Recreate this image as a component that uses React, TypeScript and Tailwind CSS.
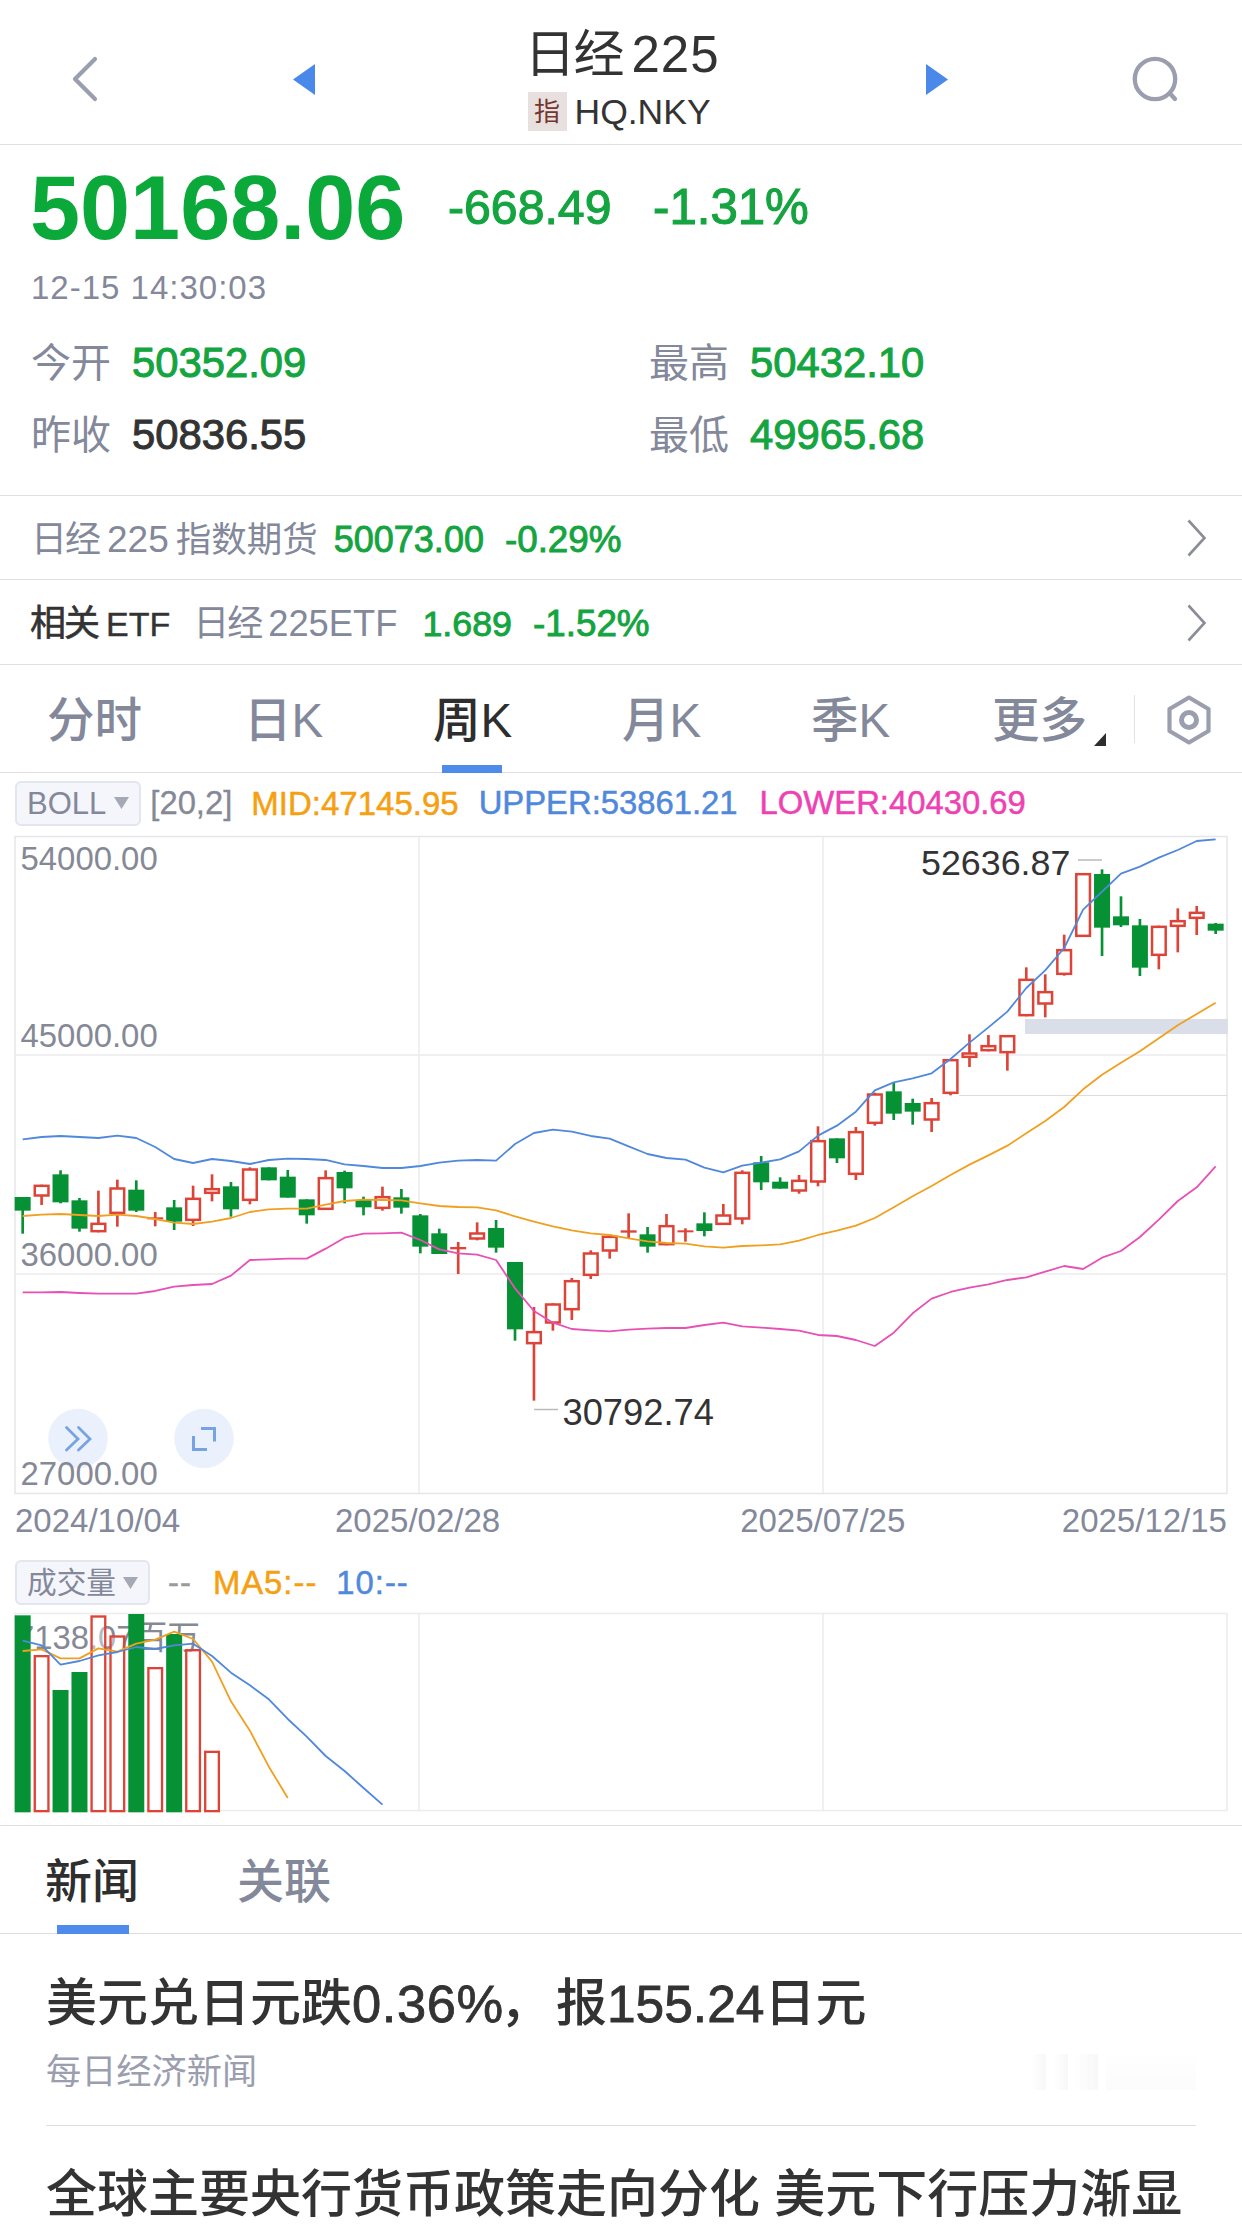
import React, { useState } from 'react';

type Candle = [string, number, number, number, number];

// direction, high, body top, body bottom, low
const candles: Candle[] = [
  ['G', 1083, 1083, 1124, 1193], ['R', 1046, 1046, 1082, 1107], ['G', 1003, 1015, 1099, 1102], ['G', 1086, 1093, 1178, 1187],
  ['R', 1064, 1160, 1189, 1189], ['R', 1031, 1054, 1134, 1172], ['G', 1033, 1061, 1124, 1128], ['R', 1128, 1144, 1150, 1171],
  ['G', 1092, 1114, 1157, 1182], ['R', 1049, 1085, 1155, 1170], ['R', 1015, 1056, 1074, 1096], ['G', 1038, 1051, 1120, 1142],
  ['R', 994, 997, 1095, 1105], ['G', 994, 994, 1033, 1033], ['G', 1002, 1022, 1085, 1085], ['G', 1090, 1090, 1138, 1163],
  ['R', 1003, 1023, 1122, 1122], ['G', 1004, 1008, 1057, 1102], ['G', 1082, 1092, 1114, 1138], ['R', 1052, 1080, 1119, 1124],
  ['G', 1059, 1084, 1115, 1133], ['G', 1134, 1138, 1232, 1252], ['G', 1178, 1192, 1254, 1254], ['R', 1218, 1233, 1240, 1314],
  ['R', 1159, 1189, 1211, 1213], ['G', 1152, 1176, 1235, 1250], ['G', 1278, 1278, 1480, 1514], ['R', 1413, 1485, 1525, 1694],
  ['R', 1402, 1402, 1463, 1484], ['R', 1326, 1332, 1423, 1452], ['R', 1243, 1249, 1320, 1329], ['R', 1199, 1199, 1247, 1268],
  ['R', 1132, 1183, 1190, 1207], ['G', 1173, 1195, 1232, 1250], ['R', 1134, 1167, 1228, 1228], ['R', 1177, 1183, 1189, 1217],
  ['G', 1129, 1162, 1185, 1201], ['R', 1104, 1135, 1167, 1167], ['R', 1003, 1007, 1151, 1165], ['G', 960, 979, 1039, 1062],
  ['G', 1024, 1037, 1058, 1058], ['R', 1017, 1031, 1067, 1073], ['R', 871, 912, 1040, 1051], ['G', 907, 907, 967, 981],
  ['R', 873, 885, 1017, 1032], ['R', 770, 772, 864, 869], ['G', 739, 766, 833, 852], ['G', 788, 801, 827, 866],
  ['R', 786, 798, 854, 888], ['R', 669, 669, 774, 778], ['R', 595, 649, 666, 693], ['R', 597, 627, 646, 646],
  ['R', 597, 597, 652, 704], ['R', 394, 428, 541, 541], ['R', 415, 465, 506, 544], ['R', 296, 339, 417, 419],
  ['R', 111, 111, 303, 303], ['G', 100, 114, 275, 360], ['G', 181, 241, 268, 273], ['G', 249, 268, 395, 420],
  ['R', 269, 269, 360, 400], ['R', 217, 252, 273, 349], ['R', 210, 227, 249, 297], ['G', 261, 263, 284, 294],
];

const upper = [
  910, 903, 900, 903, 906, 899, 906, 933, 969, 981, 969, 975, 984, 972, 968, 969, 972, 985, 990, 996, 996, 990, 980, 974, 972, 974, 924, 891, 881, 887, 900, 908,
  931, 954, 966, 971, 995, 1009, 989, 980, 970, 946, 899, 869, 827, 763, 739, 727, 712, 669, 620, 574, 527, 456, 403, 336, 221, 167, 113, 92, 65, 42, 15, 10,
];
const mid = [
  1140, 1136, 1134, 1137, 1140, 1136, 1140, 1149, 1160, 1164, 1157, 1146, 1128, 1120, 1118, 1118, 1106, 1095, 1091, 1092, 1093, 1102, 1110, 1113, 1114, 1123, 1141, 1157, 1171, 1183, 1192, 1197,
  1207, 1216, 1221, 1223, 1231, 1235, 1230, 1228, 1225, 1214, 1197, 1184, 1169, 1146, 1114, 1081, 1050, 1017, 986, 958, 929, 892, 855, 813, 760, 716, 680, 646, 607, 568, 534, 500,
];
const lower = [
  1369, 1369, 1368, 1371, 1373, 1373, 1373, 1365, 1352, 1347, 1344, 1319, 1272, 1270, 1268, 1268, 1238, 1205, 1193, 1192, 1190, 1212, 1240, 1252, 1256, 1272, 1357, 1425, 1460, 1479, 1483, 1486,
  1481, 1478, 1476, 1476, 1467, 1460, 1471, 1475, 1479, 1484, 1497, 1500, 1512, 1530, 1490, 1432, 1388, 1368, 1355, 1345, 1332, 1324, 1307, 1290, 1299, 1265, 1245, 1203, 1151, 1095, 1054, 991,
];

const volumes: [string, number][] = [
  ['G', 4], ['R', 123], ['G', 228], ['G', 174], ['R', 4], ['R', 64], ['G', 0], ['R', 159], ['G', 60], ['R', 105], ['R', 410],
];
const volMa5 = [111, 106, 133, 133, 103, 113, 89, 77, 53, 75, 143, 262, 350, 458, 552];
const volMa10 = [80, 94, 152, 141, 124, 114, 99, 105, 94, 89, 126, 176, 214, 256, 315, 368, 426, 471, 522, 572];

const RED = '#dd4437';
const GREEN = '#069234';
const ORANGE = '#f0a020';
const BLUE = '#5088dc';

const cx = (i: number) => 23 + i * 56.81;
const line = (data: number[]) => data.map((y, i) => `${cx(i).toFixed(1)},${y}`).join(' ');

const Box = ({ dir, x, top, bottom }: { dir: string; x: number; top: number; bottom: number }) => {
  if (dir === 'G') {
    return <rect x={x - 24} y={top} width={48} height={bottom - top} fill={GREEN} />;
  }
  if (bottom - top < 14) {
    return <rect x={x - 24} y={top} width={48} height={bottom - top} fill={RED} />;
  }
  return <rect x={x - 20.5} y={top + 3.5} width={41} height={bottom - top - 7} fill="#fff" stroke={RED} strokeWidth={7.5} />;
};

const KChart = () => (
  <svg width="1213" height="658" viewBox="0 0 1213 658" className="block overflow-visible" fontFamily="'Liberation Sans', sans-serif">
    <g stroke="#ececf0" strokeWidth="1.5" fill="none">
      <rect x="0" y="0.5" width="1212" height="657" stroke="#e6e6ea" />
      <path d="M0 219H1212M0 438H1212M404 0V657M808 0V657" />
      <path d="M944 259.5H1212" stroke="#dcdce0" strokeWidth="1" />
    </g>
    <rect x="1010" y="183" width="203" height="15" fill="#d9dee8" />
    <g fill="#ebf1fc">
      <circle cx="63" cy="602.5" r="29.8" />
      <circle cx="189" cy="602.5" r="29.8" />
    </g>
    <g fill="none" stroke="#76a3e2" strokeWidth="2.8" strokeLinecap="round">
      <path d="M51.5 591.5L63 603L51.5 614M63.5 591.5L75 603L63.5 614" />
      <path d="M187.5 592.5H199.5V604M178.5 601.5V613.5H190.5" strokeLinecap="square" strokeWidth="3" />
    </g>
    <g fill="#858996" fontSize="32.9">
      <text x="5.5" y="33.5">54000.00</text>
      <text x="5.5" y="210.5">45000.00</text>
      <text x="5.5" y="429.5">36000.00</text>
      <text x="5.5" y="648.5">27000.00</text>
    </g>
    <g transform="scale(0.33333)">
      {candles.map(([dir, high, top, bottom, low], i) => (
        <g key={i}>
          <rect x={cx(i) - 4} y={high} width={8} height={low - high} fill={dir === 'G' ? GREEN : RED} />
          <Box dir={dir} x={cx(i)} top={top} bottom={bottom} />
        </g>
      ))}
      <g fill="none" strokeWidth="5.4" strokeLinejoin="round">
        <polyline points={line(upper)} stroke={BLUE} />
        <polyline points={line(mid)} stroke={ORANGE} />
        <polyline points={line(lower)} stroke="#e750b4" />
      </g>
    </g>
    <g fill="#333">
      <text x="906" y="38.5" fontSize="35.8">52636.87</text>
      <text x="547.5" y="588.5" fontSize="36.3">30792.74</text>
    </g>
    <path d="M1063 24H1087M519 573.5H543" stroke="#b8bac0" strokeWidth="1.3" />
  </svg>
);

const VolumeChart = () => (
  <svg width="1213" height="199" viewBox="0 0 1213 199" className="block overflow-visible">
    <g stroke="#ececf0" strokeWidth="1.5" fill="none">
      <rect x="0" y="0.5" width="1212" height="197" />
      <path d="M404 0V197M808 0V197" />
    </g>
    <text x="1" y="35.5" fill="#858996" fontSize="32.8" fontFamily="'Liberation Sans', 'Noto Sans CJK SC', sans-serif">7138.07百万</text>
    <g transform="translate(0 1) scale(0.33333)">
      {volumes.map(([dir, top], i) =>
        dir === 'G' ? (
          <rect key={i} x={cx(i) - 24} y={top} width={48} height={595 - top} fill={GREEN} />
        ) : (
          <rect key={i} x={cx(i) - 20.5} y={top + 3.5} width={41} height={588 - top} fill="#fff" fillOpacity="0.4" stroke={RED} strokeWidth={7} />
        )
      )}
      <g fill="none" strokeWidth="5.4" strokeLinejoin="round">
        <polyline points={line(volMa5)} stroke={ORANGE} />
        <polyline points={line(volMa10)} stroke={BLUE} />
      </g>
    </g>
  </svg>
);

const Arrow = () => (
  <svg width="20" height="38" viewBox="0 0 20 38" fill="none" stroke="#8b8d96" strokeWidth="2.6" className="ml-auto mt-[1px]">
    <path d="M1.5 1.5L17.5 19L1.5 36.5" />
  </svg>
);

const Header = () => (
  <header className="flex h-[145px] items-start border-b border-[#dfdfe2]">
    <svg width="28" height="46" viewBox="0 0 28 46" fill="none" stroke="#9a9eae" strokeWidth="4.2" strokeLinecap="round" strokeLinejoin="round" className="ml-[71px] mt-14">
      <path d="M24 3L4 23L24 43" />
    </svg>
    <svg width="22" height="31" viewBox="0 0 22 31" className="ml-[194px] mt-16">
      <path d="M22 0V31L0 15.5Z" fill="#4a89ea" />
    </svg>
    <div className="ml-[197px] flex w-[220px] flex-col items-center">
      <h1 className="mt-[25px] flex h-[60px] text-[51px] leading-[60px] text-[#333]">
        <span className="tracking-[-2px]">日经</span>
        <span className="ml-[9px] tracking-[1px]">225</span>
      </h1>
      <div className="mt-[7px] flex h-[39px] w-[189px] items-center">
        <span className="flex h-[39px] w-[39px] items-center justify-center bg-[#e8dfdf] text-[26px] leading-none text-[#74352f]">指</span>
        <span className="ml-[8px] pt-[2px] text-[35.5px] leading-none text-[#333]">HQ.NKY</span>
      </div>
    </div>
    <svg width="22" height="31" viewBox="0 0 22 31" className="ml-[194px] mt-16">
      <path d="M0 0V31L22 15.5Z" fill="#4a89ea" />
    </svg>
    <svg width="50" height="50" viewBox="0 0 50 50" fill="none" stroke="#9a9eae" strokeWidth="4.3" className="ml-[184px] mt-[54px]">
      <circle cx="23" cy="25" r="20.2" />
      <path d="M38 39.5L43 45" strokeLinecap="round" />
    </svg>
  </header>
);

const Stat = ({ label, value, dark }: { label: string; value: string; dark?: boolean }) => (
  <div className="flex w-[618px] shrink-0 items-baseline">
    <span className="text-[40px] text-[#83889a]">{label}</span>
    <span className={`ml-[21px] text-[41.8px] [-webkit-text-stroke:1px] ${dark ? 'text-[#333]' : 'text-[#14a440]'}`}>{value}</span>
  </div>
);

const Quote = () => (
  <section className="h-[351px] border-b border-[#dfdfe2] pl-[30px]">
    <div className="flex h-[124px] leading-[124px]">
      <span className="w-[418px] pt-[1px] text-[90px] font-bold text-[#0ba83a]">50168.06</span>
      <span className="w-[205px] text-[48.2px] text-[#14a440] [-webkit-text-stroke:1.1px]">-668.49</span>
      <span className="text-[49.2px] text-[#14a440] [-webkit-text-stroke:1.1px]">-1.31%</span>
    </div>
    <div className="h-[58px] pl-[1px] text-[33px] leading-[38px] tracking-[1px] text-[#83889a]">12-15 14:30:03</div>
    <div className="flex h-[72px] pl-[1px] leading-[72px]">
      <Stat label="今开" value="50352.09" />
      <Stat label="最高" value="50432.10" />
    </div>
    <div className="flex h-[72px] pl-[1px] leading-[72px]">
      <Stat label="昨收" value="50836.55" dark />
      <Stat label="最低" value="49965.68" />
    </div>
  </section>
);

const tabs = ['分时', '日K', '周K', '月K', '季K', '更多'];

const Tabs = () => {
  const [active, setActive] = useState('周K');
  return (
    <nav className="flex h-[108px] border-b border-[#dfdfe2]">
      {tabs.map((tab) => (
        <button
          key={tab}
          onClick={() => setActive(tab)}
          className={`relative w-[189px] text-center text-[47.5px] font-medium leading-[111px] ${active === tab ? 'text-[#2e2e2e]' : 'text-[#83889a]'}`}
        >
          {tab}
          {active === tab && <span className="absolute bottom-[-1px] left-[64px] h-[8px] w-[60px] bg-[#4f8bea]" />}
          {tab === '更多' && (
            <svg width="12" height="13" viewBox="0 0 12 13" className="absolute left-[149px] top-[68px]">
              <path d="M12 0V13H0Z" fill="#2e2e2e" />
            </svg>
          )}
        </button>
      ))}
      <div className="mt-[30px] h-12 w-[1px] bg-[#e2e2e6]" />
      <svg width="46" height="52" viewBox="0 0 46 52" fill="none" stroke="#9a9eae" className="ml-[31px] mt-[29px]">
        <path d="M23 3.5L42.5 15V37L23 48.5L3.5 37V15Z" strokeWidth="4.2" strokeLinejoin="round" />
        <circle cx="23" cy="26" r="7.5" strokeWidth="5" />
      </svg>
    </nav>
  );
};

const Picker = ({ children }: { children: React.ReactNode }) => (
  <button className="flex h-[45px] items-center rounded-md border-2 border-[#e3e5ef] bg-[#f5f6fb] px-[10px] leading-none text-[#83889a]">
    {children}
    <svg width="15" height="12" viewBox="0 0 15 12" className="ml-[7px]">
      <path d="M0 0H15L7.5 12Z" fill="#a5a9b5" />
    </svg>
  </button>
);

const App = () => (
  <div className="h-[2239px] w-[1242px] overflow-hidden bg-white font-['Liberation_Sans','Noto_Sans_CJK_SC',sans-serif]">
    <Header />
    <Quote />

    <section className="flex h-[84px] items-center border-b border-[#dfdfe2] pl-[31px] pr-[35px] text-[36px] leading-[84px]">
      <div className="flex items-baseline pt-[4px] text-[#83889a]">
        <span className="tracking-[-2px]">日经</span>
        <span className="ml-2 text-[37px]">225</span>
        <span className="ml-[7px] text-[35.5px]">指数期货</span>
        <span className="ml-[16px] text-[36px] text-[#14a440] [-webkit-text-stroke:0.9px]">50073.00</span>
        <span className="ml-[21px] text-[36.8px] text-[#14a440] [-webkit-text-stroke:0.9px]">-0.29%</span>
      </div>
      <Arrow />
    </section>
    <section className="flex h-[85px] items-center border-b border-[#dfdfe2] pl-[30px] pr-[35px] text-[36px] leading-[84px]">
      <div className="flex items-baseline pt-[4px]">
        <span className="tracking-[-2px] text-[#333] [-webkit-text-stroke:0.6px]">相关</span>
        <span className="ml-[8px] text-[34px] text-[#333] [-webkit-text-stroke:0.4px]">ETF</span>
        <span className="ml-[23px] tracking-[-2px] text-[#83889a]">日经</span>
        <span className="ml-[7px] text-[36.3px] text-[#83889a]">225ETF</span>
        <span className="ml-[25px] text-[35.8px] text-[#14a440] [-webkit-text-stroke:0.9px]">1.689</span>
        <span className="ml-[21px] text-[36.8px] text-[#14a440] [-webkit-text-stroke:0.9px]">-1.52%</span>
      </div>
      <Arrow />
    </section>

    <Tabs />

    <section className="mx-[15px] h-[1052px]">
      <div className="flex h-[63px] items-center pb-[3px] text-[32.8px] leading-none [-webkit-text-stroke:0.5px]">
        <Picker><span className="pr-[1px] text-[31px] [-webkit-text-stroke:0]">BOLL</span></Picker>
        <span className="ml-[9px] pt-[1px] text-[#858996] [-webkit-text-stroke:0.3px]">[20,2]</span>
        <span className="ml-[19px] pt-[1px] text-[33px] text-[#f5a011]">MID:47145.95</span>
        <span className="ml-[20px] pt-[1px] text-[#5088dc]">UPPER:53861.21</span>
        <span className="ml-[22px] pt-[1px] text-[#ee42b2]">LOWER:40430.69</span>
      </div>
      <KChart />
      <div className="flex h-[53px] justify-between text-[33px] leading-[54px] text-[#83889a]">
        <span className="w-[240px]">2024/10/04</span>
        <span className="w-[326px] text-center">2025/02/28</span>
        <span className="w-[485px] text-center">2025/07/25</span>
        <span className="flex w-[162px] justify-end whitespace-nowrap">2025/12/15</span>
      </div>
      <div className="flex h-[66px] items-center pt-[5px] text-[32.8px] leading-none [-webkit-text-stroke:0.5px]">
        <Picker><span className="text-[29.7px] [-webkit-text-stroke:0]">成交量</span></Picker>
        <span className="ml-[18px] pt-[2px] tracking-[1px] text-[#9a9a9a]">--</span>
        <span className="ml-[21px] pt-[2px] tracking-[1px] text-[#f5a011]">MA5:--</span>
        <span className="ml-[19px] pt-[2px] tracking-[1px] text-[#5088dc]">10:--</span>
      </div>
      <VolumeChart />
    </section>

    <nav className="flex h-[109px] border-y border-[#dfdfe2] pl-[45px] text-[47px] font-medium leading-[112px]">
      <button className="relative text-[#2e2e2e]">
        新闻
        <span className="absolute bottom-[-1px] left-[12px] h-[9px] w-[72px] bg-[#4f8bea]" />
      </button>
      <button className="ml-[98px] text-[#83889a]">关联</button>
    </nav>

    <main className="px-[46px] text-[51px] font-medium leading-[72px] text-[#333]">
      <article className="h-[192px] border-b border-[#dfdfe2] pt-[34px]">
        <h2 className="flex h-[72px]">
          <span>美元兑日元跌</span>
          <span className="text-[52.5px] tracking-[0.6px] [-webkit-text-stroke:0.8px]">0.36%</span>
          <span className="-ml-[4px]">，</span>
          <span className="ml-[5px]">报</span>
          <span className="text-[51.5px] [-webkit-text-stroke:0.8px]">155.24</span>
          <span>日元</span>
        </h2>
        <div className="flex items-center justify-between text-[35.2px] font-normal leading-[64px] text-[#9a9eae]">
          <span>每日经济新闻</span>
          <span className="flex h-9 w-[182px] items-end justify-end gap-2 opacity-40">
            <i className="h-9 w-[14px] bg-linear-to-r from-white to-[#eeeeee]" />
            <i className="h-9 w-[14px] bg-linear-to-r from-white to-[#eeeeee]" />
            <i className="h-9 w-[22px] bg-linear-to-r from-white to-[#eeeeee]" />
            <i className="h-9 w-[90px] bg-linear-to-b from-white to-[#f7f7f7]" />
          </span>
        </div>
      </article>
      <article className="pt-[33px]">
        <h2 className="whitespace-nowrap">全球主要央行货币政策走向分化 美元下行压力渐显</h2>
      </article>
    </main>
  </div>
);

export default App;
